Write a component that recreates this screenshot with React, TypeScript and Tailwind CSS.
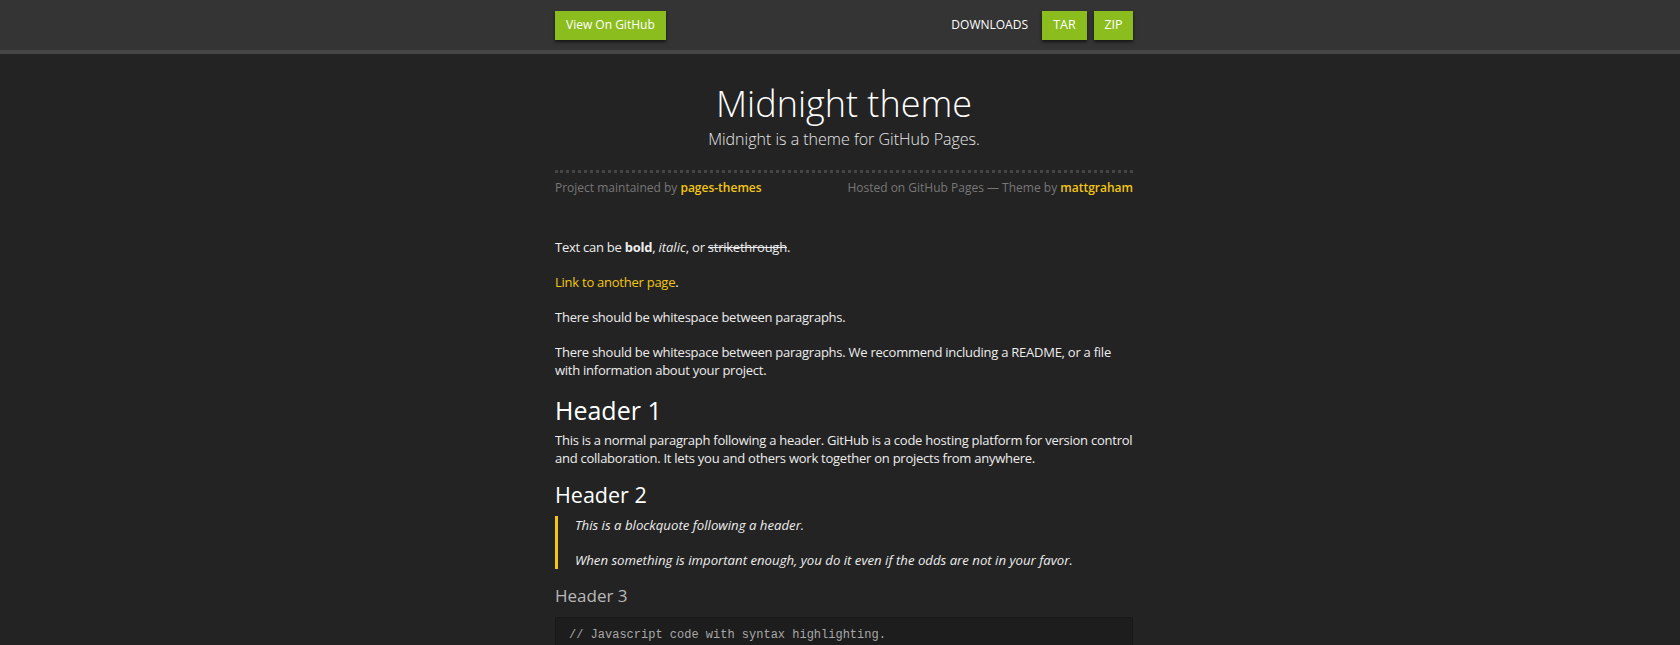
import React from "react";

const sans = { fontFamily: '"Open Sans", "Liberation Sans", sans-serif' };

export default function App() {
  return (
    <div className="min-h-screen bg-[#232323] text-[#ededed]" style={sans}>
      <header className="h-[50px] bg-[#343434] border-b-4 border-[#464646] box-content">
        <div className="mx-auto w-[586px] pl-2 h-full flex items-center justify-between">
          <a className="h-[29px] px-[11px] flex items-center bg-[#8cbd1f] text-white text-[12px] shadow-[0_2px_3px_rgba(0,0,0,0.6)]">
            View On GitHub
          </a>
          <div className="flex items-center">
            <span className="text-white text-[12px] mr-[14px]">DOWNLOADS</span>
            <a className="h-[29px] w-[45px] flex items-center justify-center bg-[#8cbd1f] text-white text-[12.5px] shadow-[0_2px_3px_rgba(0,0,0,0.6)]">
              TAR
            </a>
            <a className="ml-[7px] h-[29px] w-[39px] flex items-center justify-center bg-[#8cbd1f] text-white text-[12.5px] shadow-[0_2px_3px_rgba(0,0,0,0.6)]">
              ZIP
            </a>
          </div>
        </div>
      </header>

      <div className="mx-auto w-[586px] pl-2">
        <div className="pt-[30px] text-center">
          <h1 className="text-[36px] leading-[40px] font-light text-white">Midnight theme</h1>
          <p className="mt-[5px] text-[16px] leading-[20px] font-light text-[#e8e8e8]">
            Midnight is a theme for GitHub Pages.
          </p>
        </div>
        <div className="mt-[21px] border-t-[3px] border-dotted border-[#454545]" />
        <div className="mt-[6px] flex justify-between text-[12px] leading-[18px] text-[#777]">
          <span>
            Project maintained by <a className="text-[#f3c613] font-semibold">pages-themes</a>
          </span>
          <span>
            Hosted on GitHub Pages — Theme by <a className="text-[#f3c613] font-semibold">mattgraham</a>
          </span>
        </div>

        <div className="mt-[41px] text-[13px] leading-[18px] tracking-[-0.25px]">
          <p className="mb-[17px]">
            Text can be <strong className="font-bold">bold</strong>, <em className="tracking-normal">italic</em>, or{" "}
            <span className="line-through">strikethrough</span>.
          </p>
          <p className="mb-[17px]">
            <a className="text-[#f3c613]">Link to another page</a>.
          </p>
          <p className="mb-[17px]">There should be whitespace between paragraphs.</p>
          <p>
            There should be whitespace between paragraphs. We recommend including a README, or a file
            with information about your project.
          </p>

          <h1 className="mt-[17px] text-[25px] leading-[28px] tracking-normal text-white">Header 1</h1>
          <p className="mt-[7px]">
            This is a normal paragraph following a header. GitHub is a code hosting platform for version control
            and collaboration. It lets you and others work together on projects from anywhere.
          </p>

          <h2 className="mt-[15px] text-[21.5px] leading-[26px] tracking-normal text-white">Header 2</h2>
          <blockquote className="mt-[8px] border-l-[3px] border-[#f3c613] pl-[17px] italic text-[13.2px] tracking-normal">
            <p className="mb-[17px]">This is a blockquote following a header.</p>
            <p>When something is important enough, you do it even if the odds are not in your favor.</p>
          </blockquote>

          <h3 className="mt-[16px] text-[17px] leading-[22px] tracking-normal text-[#b8b8b8]">Header 3</h3>
          <pre
            className="mt-[10px] bg-[#1d1d1d] border border-[#181818] px-[13px] pt-[8px] pb-[10px] text-[12px] leading-[18px] tracking-normal text-[#a8a8a8]"
            style={{ fontFamily: '"Liberation Mono", "DejaVu Sans Mono", monospace' }}
          >
{`// Javascript code with syntax highlighting.
var fun = function lang(l) {
  dateformat.i18n = require('./lang/' + l)
  return true;
}`}
          </pre>
        </div>
      </div>
    </div>
  );
}
